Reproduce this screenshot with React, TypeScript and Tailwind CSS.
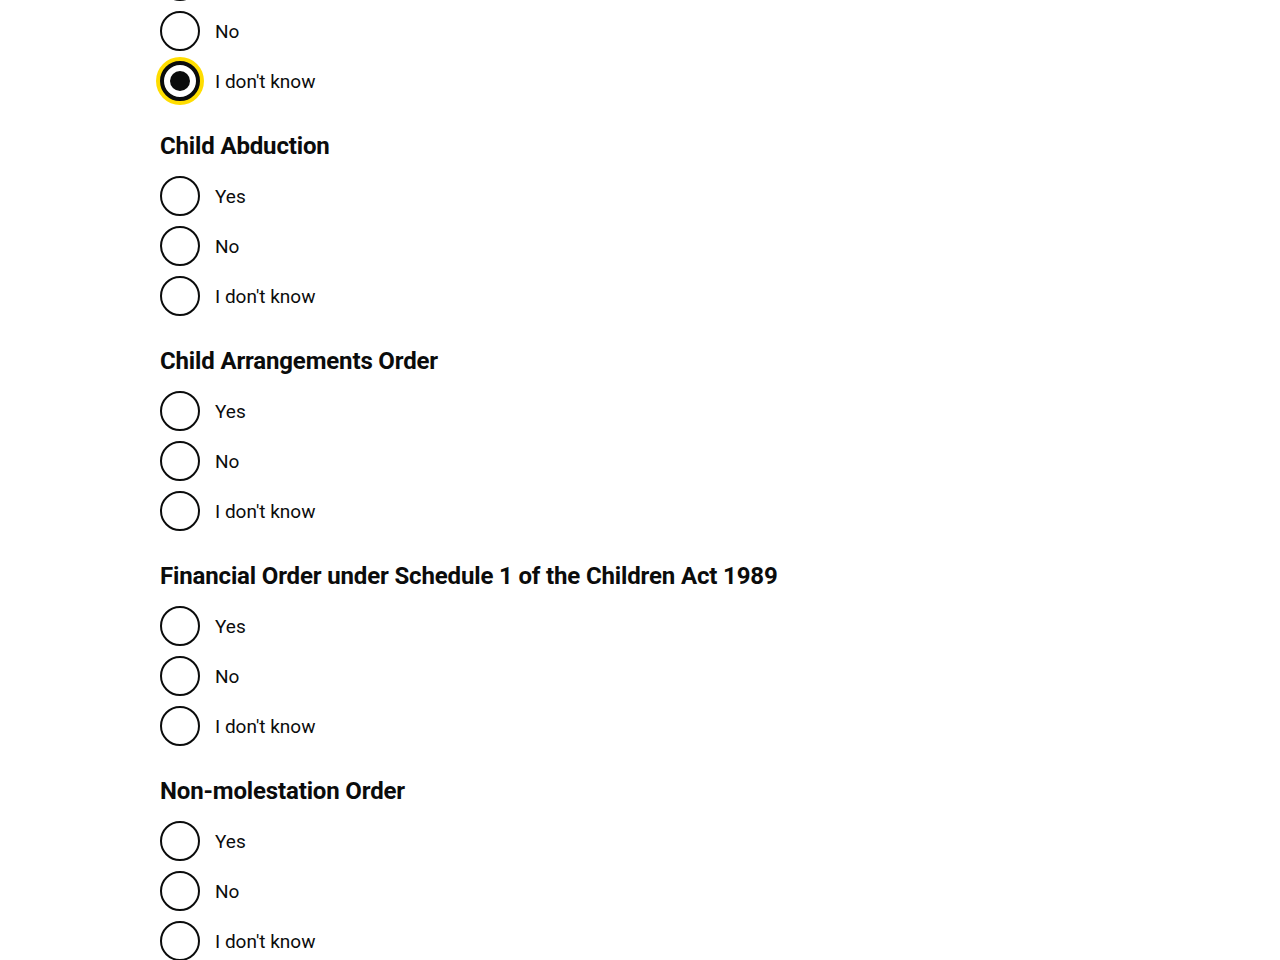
import React from "react";

const font = { fontFamily: '"Roboto", "Liberation Sans", Arial, sans-serif' };

function Radio({ label, checked = false, focused = false, hideLabel = false }: { label: string; checked?: boolean; focused?: boolean; hideLabel?: boolean }) {
  return (
    <div className="flex items-center h-10">
      <div
        className={
          "relative w-10 h-10 rounded-full bg-white shrink-0 border-[#0b0c0c] " +
          (focused ? "border-4 shadow-[0_0_0_4px_#ffdd00]" : "border-2")
        }
      >
        {checked && (
          <div className="absolute left-1/2 top-1/2 w-5 h-5 -translate-x-1/2 -translate-y-1/2 rounded-full bg-[#0b0c0c]" />
        )}
      </div>
      {!hideLabel && (
        <span className="pl-[15px] text-[19px] leading-[25px] text-[#0b0c0c]">{label}</span>
      )}
    </div>
  );
}

function Group({ title, focusedLast = false, clippedFirst = false }: { title?: string; focusedLast?: boolean; clippedFirst?: boolean }) {
  return (
    <div className="mb-[30px]">
      {title && (
        <h2 className="text-[24px] leading-[30px] font-bold text-[#0b0c0c] mb-[15px] tracking-[-0.15px]">{title}</h2>
      )}
      <div className="flex flex-col gap-[10px]">
        <Radio label="Yes" hideLabel={clippedFirst} />
        <Radio label="No" />
        <Radio label="I don't know" checked={focusedLast} focused={focusedLast} />
      </div>
    </div>
  );
}

export default function App() {
  return (
    <div className="w-[1280px] h-[960px] overflow-hidden bg-white" style={font}>
      <div className="pl-[160px] mt-[-39px]">
        <Group focusedLast clippedFirst />
        <Group title="Child Abduction" />
        <Group title="Child Arrangements Order" />
        <Group title="Financial Order under Schedule 1 of the Children Act 1989" />
        <Group title="Non-molestation Order" />
      </div>
    </div>
  );
}
